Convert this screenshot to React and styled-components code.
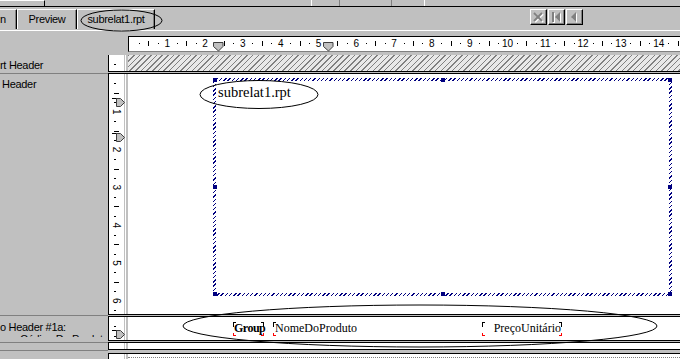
import React from 'react';
import styled, { createGlobalStyle } from 'styled-components';

const GRAY = '#c0c0c0';
const DARK = '#808080';
const NAVY = '#000080';
const UNIT = 37.8;

const GlobalStyle = createGlobalStyle`
  *, *::before, *::after { box-sizing: border-box; }
  html, body { margin: 0; padding: 0; background: ${GRAY}; }
  body { width: 680px; height: 359px; overflow: hidden; }
`;

const Window = styled.div`
  position: relative;
  width: 680px;
  height: 359px;
  overflow: hidden;
  background: ${GRAY};
  font-family: "Liberation Sans", Arial, sans-serif;
  font-size: 11px;
  letter-spacing: -0.3px;
  color: #000;
  display: flex;
  flex-direction: column;
`;

/* ---------- top strip ---------- */
const TopStrip = styled.div`
  flex: none;
  height: 7px;
  display: flex;
  border-bottom: 1px solid #000;
`;
const StripCell = styled.div`
  flex: ${p => (p.$w ? 'none' : '1')};
  width: ${p => (p.$w ? `${p.$w}px` : 'auto')};
  border-top: ${p => (p.$light ? '1px solid #fff' : 'none')};
  border-right: ${p => (p.$edge ? `1px solid ${p.$edge}` : 'none')};
`;

/* ---------- tabs ---------- */
const TabBar = styled.div`
  flex: none;
  height: 24px;
  display: flex;
  align-items: flex-start;
  padding-top: 2px;
  border-bottom: 1px solid #fff;
`;
const Tab = styled.div`
  flex: none;
  width: ${p => p.$w}px;
  height: 20px;
  display: flex;
  align-items: center;
  justify-content: ${p => (p.$start ? 'flex-start' : 'center')};
  border-top: 1px solid #fff;
  border-left: ${p => (p.$start ? 'none' : '1px solid #fff')};
  border-right: 1px solid #000;
  box-shadow: inset -1px 0 0 ${DARK};
  white-space: nowrap;
  padding-bottom: 1px;
`;
const NavGroup = styled.div`
  display: flex;
  gap: 1px;
  margin-left: auto;
  margin-right: 97px;
`;
const NavButton = styled.div`
  width: 17px;
  height: 16px;
  display: flex;
  align-items: center;
  justify-content: center;
  background: ${GRAY};
  border-top: 1px solid #fff;
  border-left: 1px solid #fff;
  border-right: 1px solid #000;
  border-bottom: 1px solid #000;
  box-shadow: inset -1px -1px 0 ${DARK};
`;

/* ---------- horizontal ruler ---------- */
const RulerRow = styled.div`
  flex: none;
  height: 24px;
  padding: 5px 0 0 128px;
  display: flex;
  align-items: flex-start;
`;
const Ruler = styled.div`
  flex: 1;
  height: 16px;
  background: #fff;
  border-top: 1px solid #000;
  border-left: 1px solid #000;
  border-bottom: 1px solid ${DARK};
  position: relative;
  z-index: 1;
`;
const ScaleSvg = styled.svg`
  display: block;
  overflow: visible;
  font-family: "Liberation Sans", Arial, sans-serif;
  letter-spacing: 0;
`;

/* ---------- sections ---------- */
const Sections = styled.div`
  flex: 1;
  display: flex;
  flex-direction: column;
`;
const SectionRow = styled.div`
  flex: none;
  height: ${p => p.$h}px;
  display: grid;
  grid-template-columns: 108px 16px 4px 1fr;
  overflow: visible;
`;
const Label = styled.div`
  overflow: hidden;
  white-space: nowrap;
  height: ${p => (p.$clip ? `${p.$clip}px` : 'auto')};
  padding-top: ${p => p.$pt || 0}px;
  line-height: 12px;
`;
const LabelLine = styled.div`
  padding-left: ${p => p.$indent || 0}px;
`;
const VRuler = styled.div`
  position: relative;
  background: #fff;
  border-left: 1px solid #000;
`;
const Gutter = styled.div`
  background: linear-gradient(to right, ${GRAY} 0 1px, #fff 1px 2px, ${GRAY} 2px);
`;
const Content = styled.div`
  position: relative;
  overflow: hidden;
  background: ${p =>
    p.$hatched
      ? `repeating-linear-gradient(135deg, ${DARK} 0 1px, #e8e8e8 1px 4px)`
      : '#fff'};
  display: flex;
  align-items: flex-start;
  padding-top: ${p => p.$pt || 0}px;
`;

const SepRow = styled.div`
  flex: none;
  height: ${p => p.$h}px;
  display: grid;
  grid-template-columns: 108px 1fr;
`;
const SepLabel = styled.div`
  background: linear-gradient(
    to bottom,
    transparent 0 ${p => p.$at}px,
    ${DARK} ${p => p.$at}px ${p => p.$at + 1}px,
    transparent ${p => p.$at + 1}px
  );
`;
const SepBar = styled.div`
  background: linear-gradient(
    to bottom,
    #000 0 1px,
    ${GRAY} 1px ${p => p.$h - 1}px,
    #000 ${p => p.$h - 1}px
  );
`;

/* ---------- subreport ---------- */
const SubreportFrame = styled.div`
  position: relative;
  flex: none;
  width: 459px;
  height: 218px;
  margin: 4px 0 0 85px;
  padding: 3px;
  background: repeating-linear-gradient(135deg, ${NAVY} 0 1px, #fff 1px 3px);
`;
const SubreportBody = styled.div`
  width: 100%;
  height: 100%;
  background: #fff;
  padding: 3px 0 0 2px;
  font-family: "Liberation Serif", "Times New Roman", serif;
  font-size: 14.5px;
  line-height: 16px;
  letter-spacing: 0;
`;
const Handle = styled.span`
  position: absolute;
  width: 4px;
  height: 4px;
  background: ${NAVY};
  left: ${p => (p.$x === 'l' ? '0' : p.$x === 'm' ? 'calc(50% - 2px)' : 'auto')};
  right: ${p => (p.$x === 'r' ? '0' : 'auto')};
  top: ${p => (p.$y === 't' ? '0' : p.$y === 'm' ? 'calc(50% - 2px)' : 'auto')};
  bottom: ${p => (p.$y === 'b' ? '0' : 'auto')};
`;

/* ---------- fields ---------- */
const Field = styled.div`
  position: relative;
  flex: none;
  width: ${p => p.$w}px;
  height: 14px;
  margin-left: ${p => p.$ml}px;
  padding: 1px 1px 0 ${p => (p.$bold ? 1 : 2)}px;
  text-align: ${p => p.$align || 'left'};
  font-family: "Liberation Serif", "Times New Roman", serif;
  font-size: 12px;
  font-weight: ${p => (p.$bold ? 700 : 400)};
  letter-spacing: ${p => (p.$bold ? '-0.5px' : '0')};
  line-height: 11px;
  white-space: nowrap;
`;
const Corner = styled.span`
  position: absolute;
  width: 3px;
  height: ${p => (p.$b ? 3 : 5)}px;
  ${p => (p.$b ? 'bottom: 0;' : 'top: 0;')}
  ${p => (p.$r ? 'right: 0;' : 'left: 0;')}
  border-style: solid;
  border-color: ${p => (p.$b ? '#ff0000' : '#000')};
  border-width: ${p =>
    `${p.$b ? 0 : 1}px ${p.$r ? 1 : 0}px ${p.$b ? 1 : 0}px ${p.$r ? 0 : 1}px`};
`;

const DottedLine = styled.div`
  flex: 1;
  margin-top: 3px;
  border-top: 1px dotted ${DARK};
`;

const Overlay = styled.svg`
  position: absolute;
  left: 0;
  top: 0;
  width: 680px;
  height: 359px;
  pointer-events: none;
  z-index: 5;
`;

/* ---------- drawings ---------- */
function HScale({ width = 552 }) {
  const items = [];
  for (let i = 1; ; i++) {
    const x = 0.5 + (i * UNIT) / 4;
    if (x > width) break;
    if (i % 4 === 0) {
      items.push(
        <text key={i} x={x} y={10} textAnchor="middle" fontSize="10">
          {i / 4}
        </text>
      );
    } else if (i % 2 === 0) {
      items.push(<rect key={i} x={Math.round(x)} y={4} width={1} height={5} />);
    } else {
      items.push(<rect key={i} x={Math.round(x)} y={6} width={1} height={1} />);
    }
  }
  const marker = cx => (
    <polygon
      points={`${cx - 5},5.5 ${cx + 4.5},5.5 ${cx + 4.5},9.5 ${cx},14 ${cx - 5},9.5`}
      fill={GRAY}
      stroke="#404040"
      strokeWidth="1"
    />
  );
  return (
    <ScaleSvg width={width} height={14}>
      {items}
      {marker(89.5)}
      {marker(199.5)}
    </ScaleSvg>
  );
}

function VScale({ h, markers = [] }) {
  const items = [];
  for (let i = 1; ; i++) {
    const y = (i * UNIT) / 4;
    if (y > h - 2) break;
    if (i % 4 === 0) {
      items.push(
        <text
          key={i}
          x={7.5}
          y={y}
          transform={`rotate(90 7.5 ${y})`}
          textAnchor="middle"
          dominantBaseline="central"
          fontSize="10"
        >
          {i / 4}
        </text>
      );
    } else if (i % 2 === 0) {
      items.push(<rect key={i} x={5} y={Math.round(y)} width={5} height={1} />);
    } else {
      items.push(<rect key={i} x={5} y={Math.round(y)} width={2} height={1} />);
    }
  }
  return (
    <ScaleSvg width={15} height={h}>
      {items}
      {markers.map(m => (
        <g key={m}>
          <line x1={3} y1={m + 0.5} x2={8} y2={m + 0.5} stroke="#000" />
          <polygon
            points={`${7.5},${m + 0.5} ${11.5},${m + 0.5} ${15.5},${m + 4.5} ${11.5},${m + 8.5} ${7.5},${m + 8.5}`}
            fill={GRAY}
            stroke="#404040"
          />
        </g>
      ))}
    </ScaleSvg>
  );
}

function DisabledGlyph({ kind }) {
  const shape = (dx, color) => {
    if (kind === 'x')
      return (
        <g transform={`translate(${dx} ${dx})`} stroke={color} strokeWidth="2">
          <line x1="1" y1="1" x2="9" y2="9" />
          <line x1="9" y1="1" x2="1" y2="9" />
        </g>
      );
    if (kind === 'first')
      return (
        <g transform={`translate(${dx} ${dx})`} fill={color}>
          <rect x="1" y="0" width="2" height="10" />
          <polygon points="9,0 9,10 4,5" />
        </g>
      );
    return (
      <g transform={`translate(${dx} ${dx})`} fill={color}>
        <polygon points="7,0 7,10 2,5" />
      </g>
    );
  };
  return (
    <svg width="11" height="11" viewBox="0 0 11 11">
      {shape(1, '#fff')}
      {shape(0, DARK)}
    </svg>
  );
}

function SectionSep({ h, at }) {
  return (
    <SepRow $h={h}>
      <SepLabel $at={at} />
      <SepBar $h={h} />
    </SepRow>
  );
}

export default function App() {
  return (
    <>
      <GlobalStyle />
      <Window>
        <TopStrip>
          <StripCell $w={45} $light $edge="#000" />
          <StripCell $w={267} $edge="#fff" />
          <StripCell $w={28} $edge={DARK} />
          <StripCell $w={52} $edge={DARK} />
          <StripCell $w={33} $edge="#fff" />
          <StripCell />
        </TopStrip>

        <TabBar>
          <Tab $w={17} $start>n</Tab>
          <Tab $w={60}>Preview</Tab>
          <Tab $w={78}>subrelat1.rpt</Tab>
          <NavGroup>
            <NavButton><DisabledGlyph kind="x" /></NavButton>
            <NavButton><DisabledGlyph kind="first" /></NavButton>
            <NavButton><DisabledGlyph kind="prev" /></NavButton>
          </NavGroup>
        </TabBar>

        <RulerRow>
          <Ruler>
            <HScale />
          </Ruler>
        </RulerRow>

        <Sections>
          <SectionRow $h={16}>
            <Label $pt={4}>
              <LabelLine>rt Header</LabelLine>
            </Label>
            <VRuler><VScale h={16} /></VRuler>
            <Gutter />
            <Content $hatched />
          </SectionRow>
          <SectionSep h={3} at={2} />

          <SectionRow $h={240}>
            <Label $pt={4}>
              <LabelLine $indent={2}>Header</LabelLine>
            </Label>
            <VRuler><VScale h={240} markers={[24, 59]} /></VRuler>
            <Gutter />
            <Content>
              <SubreportFrame>
                <SubreportBody>subrelat1.rpt</SubreportBody>
                <Handle $x="l" $y="t" />
                <Handle $x="m" $y="t" />
                <Handle $x="r" $y="t" />
                <Handle $x="l" $y="m" />
                <Handle $x="r" $y="m" />
                <Handle $x="l" $y="b" />
                <Handle $x="m" $y="b" />
                <Handle $x="r" $y="b" />
              </SubreportFrame>
            </Content>
          </SectionRow>
          <SectionSep h={3} at={1} />

          <SectionRow $h={23}>
            <Label $pt={4} $clip={20}>
              <LabelLine>o Header #1a:</LabelLine>
              <LabelLine $indent={20}>Código Do Produto</LabelLine>
            </Label>
            <VRuler><VScale h={23} markers={[13]} /></VRuler>
            <Gutter />
            <Content $pt={5}>
              <Field $ml={105} $w={31} $bold>
                Group
                <Corner /><Corner $r /><Corner $b /><Corner $b $r />
              </Field>
              <Field $ml={9} $w={200}>
                NomeDoProduto
                <Corner /><Corner $b />
              </Field>
              <Field $ml={9} $w={80} $align="right">
                PreçoUnitário
                <Corner /><Corner $r /><Corner $b /><Corner $b $r />
              </Field>
            </Content>
          </SectionRow>
          <SectionSep h={3} at={2} />

          <SectionRow $h={6}>
            <Label />
            <VRuler />
            <Gutter />
            <Content />
          </SectionRow>
          <SectionSep h={5} at={1} />

          <SectionRow $h={6}>
            <Label />
            <VRuler />
            <Gutter />
            <Content>
              <DottedLine />
            </Content>
          </SectionRow>
        </Sections>

        <Overlay viewBox="0 0 680 359">
          <g fill="none" stroke="#000" strokeWidth="1">
            <ellipse cx="121.5" cy="20.5" rx="40.5" ry="10.5" />
            <ellipse cx="259" cy="94.5" rx="59" ry="14" />
            <ellipse cx="420" cy="326" rx="237" ry="21" />
          </g>
        </Overlay>
      </Window>
    </>
  );
}
